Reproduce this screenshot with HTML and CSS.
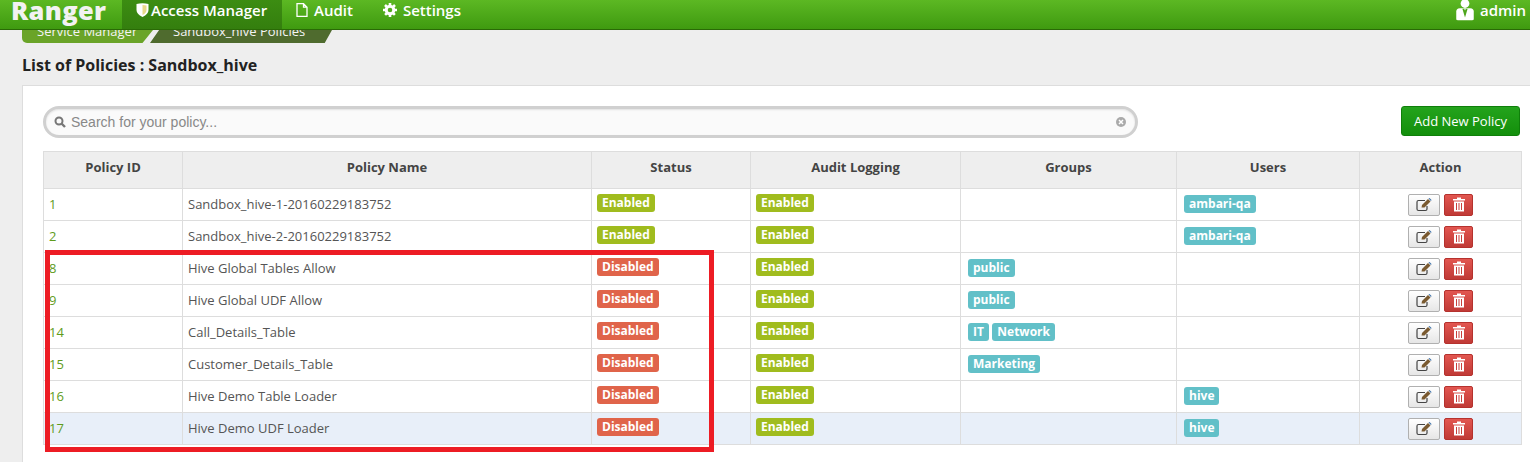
FILE: index.html
```html
<!doctype html>
<html>
<head>
<meta charset="utf-8">
<title>Ranger - List of Policies</title>
<link rel="stylesheet" href="styles.css">
</head>
<body>
<div class="header">
	<div class="logo">Ranger</div>
	<ul class="nav">
		<li class="nav-item active">
			<svg class="nav-icon shield" viewBox="0 0 12 14"><path fill="#fff" d="M0 1 Q6 -0.5 12 1 V7 Q12 11 6 14 Q0 11 0 7Z"/><path fill="#e8d98a" d="M6 2 Q8.500 2 10 2.500 V7 Q10 10 6 12Z"/></svg>
			Access Manager
		</li>
		<li class="nav-item">
			<svg class="nav-icon file" viewBox="0 0 12 14"><path fill="none" stroke="#fff" stroke-width="1.300" d="M1 .7 H7.500 L11 4.200 V13.300 H1Z M7.500 .7 V4.200 H11"/></svg>
			Audit
		</li>
		<li class="nav-item">
			<svg class="nav-icon cog" viewBox="0 0 14 14"><circle cx="7" cy="7" r="3.800" fill="none" stroke="#fff" stroke-width="3"/><path stroke="#fff" stroke-width="2.600" d="M7 0 V14 M0 7 H14 M2 2 L12 12 M12 2 L2 12" stroke-dasharray="2.600 8.800 2.600"/></svg>
			Settings
		</li>
	</ul>
	<div class="user">
		<svg class="user-icon" viewBox="0 0 20 24"><circle cx="10" cy="4" r="5" fill="#fff"/><path fill="#fff" d="M0 22 V13 Q0 10 4 9.500 H16 Q20 10 20 13 V22 Q20 23 18 23 H2 Q0 23 0 22Z"/><path fill="#4ea51c" d="M7 10 L10 20 L13 10 L11 10 L10 12 L9 10Z"/></svg>
		<span>admin</span>
	</div>
</div>

<div class="crumb-wrap">
	<ul class="crumbs">
		<li class="crumb first">Service Manager</li>
		<li class="crumb second">Sandbox_hive Policies</li>
	</ul>
</div>

<h3 class="page-title">List of Policies : Sandbox_hive</h3>

<div class="card">
	<div class="toolbar">
		<div class="search">
			<svg class="search-icon" viewBox="0 0 12 12"><circle cx="5" cy="5" r="3.500" fill="none" stroke="#777" stroke-width="2"/><path stroke="#777" stroke-width="2.400" d="M7.500 7.500 L11 11"/></svg>
			<span class="search-text">Search for your policy...</span>
			<svg class="clear-icon" viewBox="0 0 10 10"><circle cx="5" cy="5" r="5" fill="#aaa"/><path stroke="#fff" stroke-width="1.500" d="M3 3 L7 7 M7 3 L3 7"/></svg>
		</div>
		<a class="btn-add" href="javascript:;">Add New Policy</a>
	</div>

	<table class="policies">
		<colgroup>
			<col class="c-id"><col class="c-name"><col class="c-status"><col class="c-audit"><col class="c-groups"><col class="c-users"><col class="c-action">
		</colgroup>
		<thead>
			<tr><th>Policy ID</th><th>Policy Name</th><th>Status</th><th>Audit Logging</th><th>Groups</th><th>Users</th><th>Action</th></tr>
		</thead>
		<tbody id="rows"></tbody>
	</table>

	<div class="highlight"></div>
</div>

<script>
var rows = [
	[1, 'Sandbox_hive-1-20160229183752', 1, [], ['ambari-qa']],
	[2, 'Sandbox_hive-2-20160229183752', 1, [], ['ambari-qa']],
	[8, 'Hive Global Tables Allow', 0, ['public'], []],
	[9, 'Hive Global UDF Allow', 0, ['public'], []],
	[14, 'Call_Details_Table', 0, ['IT', 'Network'], []],
	[15, 'Customer_Details_Table', 0, ['Marketing'], []],
	[16, 'Hive Demo Table Loader', 0, [], ['hive']],
	[17, 'Hive Demo UDF Loader', 0, [], ['hive']]
];
var editIcon = '<svg viewBox="0 0 16 14"><path fill="none" stroke="#444" stroke-width="1.200" d="M9 2.500 H2.500 Q1 2.500 1 4 V11 Q1 12.500 2.500 12.500 H9.500 Q11 12.500 11 11 V8"/><path fill="#7a5a30" d="M5.500 9.500 L6 7 L12 1 L14.500 3.500 L8.500 9.500Z"/><path fill="#3a6ea5" d="M12.500 .5 L13.500 0 L15.500 2 L15 3Z"/></svg>';
var trashIcon = '<svg viewBox="0 0 12 14"><path fill="#fff" d="M4 0 H8 V1.500 H12 V3 H0 V1.500 H4Z M1 4 H11 V14 H1Z"/><path stroke="#c9403c" stroke-width="1" d="M3.500 5.500 V12.500 M6 5.500 V12.500 M8.500 5.500 V12.500"/></svg>';
function tags(list){
	return list.map(function(t){ return '<span class="tag info">' + t + '</span>'; }).join(' ');
}
var html = '';
for(var i = 0; i < rows.length; i++){
	var r = rows[i];
	html += '<tr>' +
		'<td class="id">' + r[0] + '</td>' +
		'<td>' + r[1] + '</td>' +
		'<td>' + (r[2] ? '<span class="tag on">Enabled</span>' : '<span class="tag off">Disabled</span>') + '</td>' +
		'<td><span class="tag on">Enabled</span></td>' +
		'<td class="list">' + tags(r[3]) + '</td>' +
		'<td class="list">' + tags(r[4]) + '</td>' +
		'<td class="actions"><a class="btn-edit">' + editIcon + '</a><a class="btn-del">' + trashIcon + '</a></td>' +
		'</tr>';
}
document.getElementById('rows').innerHTML = html;
</script>
</body>
</html>
```

FILE: styles.css
```css
*{margin:0; padding:0; box-sizing:border-box; list-style:none; text-decoration:none;}
html,body{height:462px; overflow:hidden;}
body{background:#eee; font-family:"Open Sans","Noto Sans",sans-serif; font-size:13px; color:#555;}

.header{height:30px; display:flex; align-items:stretch; background:linear-gradient(#5cb823,#3f9a10); border-bottom:1px solid #2a6a06; color:#fff; overflow:hidden;}
.logo{width:122px; padding-left:11px; font-size:25.500px; font-weight:800; line-height:20px; color:#f2f2f2; letter-spacing:.3px;}
.nav{display:flex;}
.nav-item{display:flex; align-items:center; padding:0 16px 10px 14px; height:29px; font-size:15px; font-weight:600; line-height:20px; white-space:nowrap;}
.nav-item.active{width:160px; padding-right:0; background:linear-gradient(#3c8d12,#347e0e);}
.nav-icon{display:block; margin-right:5px;}
.shield{width:13px; height:14px; margin-right:2px;}
.file{width:12px; height:14px; margin-right:6px;}
.cog{width:14px; height:14px; margin-right:6px;}
.user{margin-left:auto; display:flex; align-items:flex-start; padding-right:4px; font-size:15px; font-weight:600; line-height:20px; height:29px;}
.user-icon{width:18px; height:21px; margin-right:6px; display:block;}

.crumb-wrap{height:13px; padding-left:22px; display:flex; align-items:flex-end; overflow:hidden;}
.crumbs{display:flex; height:24px;}
.crumb{height:24px; line-height:25px; font-size:13px; color:#f4f4f4; white-space:nowrap;}
.crumb.first{width:131px; padding-left:15px; background:#6aa428; border-radius:0 0 0 5px; clip-path:polygon(0 0,100% 0,100% 46%,92% 100%,0 100%);}
.crumb.second{width:182px; margin-left:-3px; padding-left:23px; background:#4f6b2e; clip-path:polygon(0 0,96% 0,100% 46%,96% 100%,0 100%,5% 46%,0 0);}

.page-title{height:42px; padding:12px 0 0 22px; font-size:16px; line-height:20px; font-weight:700; color:#222;}

.card{position:relative; height:378px; margin-left:22px; padding:20px 10px 0 20px; background:#fff; border:1px solid #ddd; border-right:0;}
.toolbar{display:flex; justify-content:space-between; align-items:flex-start; height:45px;}
.search{width:1095px; height:32px; display:flex; align-items:center; padding:0 9px 0 8px; background:#fafafa; border:3px solid #d0d0d0; border-radius:16px; box-shadow:inset 0 1px 2px rgba(0,0,0,.1);}
.search-icon{width:12px; height:12px; margin-right:5px; flex:none;}
.search-text{flex:1; font-family:"Liberation Sans",Arial,sans-serif; font-size:14px; color:#888;}
.clear-icon{width:10px; height:10px; flex:none;}
.btn-add{width:119px; height:30px; line-height:29px; text-align:center; font-size:13px; font-weight:400; color:#fff; background:linear-gradient(#24a31c,#138f0c); border:1px solid #0f7f0a; border-radius:3px;}

.policies{width:1478px; table-layout:fixed; border-collapse:collapse;}
.c-id{width:139px;} .c-name{width:409px;} .c-status{width:159px;} .c-audit{width:210px;}
.c-groups{width:216px;} .c-users{width:183px;} .c-action{width:162px;}
.policies th{height:37px; padding-bottom:6px; background:#eee; border:1px solid #ddd; font-size:13px; font-weight:700; color:#444; text-align:center;}
.policies td{height:32px; padding:0 5px 2px; border:1px solid #ddd; font-size:13px; color:#555; white-space:nowrap;}
.policies tbody tr:last-child td{background:#e8eff9;}
.policies td.id{color:#5f9c1c;}
.policies td.list{padding-left:7px;}

.tag{display:inline-block; height:18px; line-height:17px; padding:0 5px; border-radius:3px; font-size:12px; font-weight:700; color:#fff; vertical-align:2px;}
.tag.on{background:#a0bc1e;}
.tag.off{background:#e0644a;}
.tag.info{background:#62c0c8; vertical-align:0;}

.policies td.actions{padding-bottom:0; text-align:center;}
.btn-edit,.btn-del{display:inline-flex; align-items:center; justify-content:center; height:22px; border-radius:2px; vertical-align:middle;}
.btn-edit{width:32px; margin-right:4px; background:linear-gradient(#fff,#e6e6e6); border:1px solid #b0b0b0;}
.btn-edit svg{width:16px; height:14px;}
.btn-del{width:29px; background:linear-gradient(#e25650,#c03a36); border:1px solid #b5322e;}
.btn-del svg{width:12px; height:15px;}

.highlight{position:absolute; left:22px; top:164px; width:669px; height:202px; border:5px solid #ed1c24;}
```
